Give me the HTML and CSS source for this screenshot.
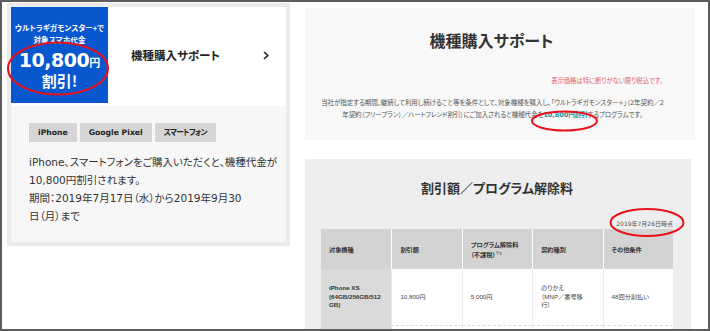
FILE: index.html
```html
<!DOCTYPE html>
<html lang="ja">
<head>
<meta charset="utf-8">
<title>機種購入サポート</title>
<link rel="stylesheet" href="styles.css">
</head>
<body>
<div class="frame">
  <div class="layout">
    <article class="promo-card">
      <div class="promo-head">
        <div class="promo-badge">
          <p class="badge-lead">ウルトラギガモンスター+で<br>対象スマホ代金</p>
          <p class="badge-amount">10,800<span class="yen">円</span></p>
          <p class="badge-off">割引!</p>
        </div>
        <div class="promo-title">機種購入サポート</div>
        <svg class="chevron" width="6" height="9" viewBox="0 0 6 9"><polyline points="1,1 4.8,4.5 1,8" fill="none" stroke="#222" stroke-width="1.6"/></svg>
      </div>
      <div class="promo-body">
        <ul class="tags">
          <li>iPhone</li>
          <li>Google Pixel</li>
          <li class="tag-ja">スマートフォン</li>
        </ul>
        <p class="promo-text">iPhone、スマートフォンをご購入いただくと、機種代金が<br>10,800円割引されます。<br>期間：2019年7月17日（水）から2019年9月30<br>日（月）まで</p>
      </div>
    </article>

    <main class="detail">
      <section class="intro">
        <h1 class="intro-title">機種購入サポート</h1>
        <p class="tax-note">表示価格は特に断りがない限り税込です。</p>
        <p class="intro-text">当社が指定する期間、継続して利用し続けること等を条件として、対象機種を購入し、「ウルトラギガモンスター+」（2年契約／2年契約（フリープラン）／ハートフレンド割引）にご加入されると機種代金を<strong class="accent">10,800円割引</strong>するプログラムです。</p>
      </section>

      <section class="fees">
        <h2 class="fees-title">割引額／プログラム解除料</h2>
        <p class="as-of">2019年7月26日時点</p>
        <table class="fee-table">
          <thead>
            <tr>
              <th>対象機種</th>
              <th>割引額</th>
              <th>プログラム解除料<br>（不課税）<sup>※1</sup></th>
              <th>契約種別</th>
              <th>その他条件</th>
            </tr>
          </thead>
          <tbody>
            <tr>
              <td class="model">iPhone XS<br>(64GB/256GB/512<br>GB)</td>
              <td>10,800円</td>
              <td>5,000円</td>
              <td>のりかえ<br>（MNP／番号移<br>行）</td>
              <td>48回分割払い</td>
            </tr>
            <tr>
              <td class="model">iPhone XS Max<br>(64GB/256GB/512<br>GB)</td>
              <td>10,800円</td>
              <td>5,000円</td>
              <td>のりかえ<br>（MNP／番号移<br>行）</td>
              <td>48回分割払い</td>
            </tr>
          </tbody>
        </table>
      </section>
    </main>
  </div>

  <svg class="marks" width="710" height="331" viewBox="0 0 710 331">
    <ellipse cx="58" cy="68.5" rx="50" ry="26" />
    <ellipse cx="564.5" cy="121" rx="32.5" ry="9.5" />
    <ellipse cx="647" cy="222.5" rx="36.5" ry="13.5" />
  </svg>
</div>
</body>
</html>
```

FILE: styles.css
```css
* {
  box-sizing: border-box;
}

body {
  margin: 0;
  font-family: "DejaVu Sans", "Noto Sans CJK JP", sans-serif;
  font-feature-settings: "palt";
  color: #333;
  background: #fff;
}

p, h1, h2 {
  margin: 0;
}

.frame {
  position: relative;
  width: 710px;
  height: 331px;
  border: 2px solid #5c5c5c;
  overflow: hidden;
  background: #fff;
}

.layout {
  display: flex;
  align-items: flex-start;
  padding: 1px 0 0 5px;
}

/* ---------- left promo card ---------- */
.promo-card {
  flex: none;
  width: 283px;
  border: 4px solid #ebebeb;
  background: #fff;
}

.promo-head {
  display: flex;
  align-items: center;
  height: 96px;
}

.promo-badge {
  align-self: stretch;
  width: 97px;
  background: #0957cf;
  color: #fff;
  text-align: center;
  font-family: "Noto Sans CJK JP", sans-serif;
  font-weight: 700;
  padding-top: 15px;
}

.badge-lead {
  font-size: 7.5px;
  line-height: 12px;
  letter-spacing: 0.1px;
}

.badge-amount {
  margin-top: 3px;
  font-family: "DejaVu Sans", sans-serif;
  font-size: 19px;
  line-height: 22px;
  letter-spacing: -0.5px;
}

.badge-amount .yen {
  font-family: "Noto Sans CJK JP", sans-serif;
  font-size: 11px;
  letter-spacing: 0;
}

.badge-off {
  font-size: 15px;
  line-height: 16px;
}

.promo-title {
  flex: 1;
  margin-left: 23px;
  font-family: "Noto Sans CJK JP", sans-serif;
  font-weight: 700;
  font-size: 11.5px;
  color: #222;
}

.chevron {
  margin-right: 17px;
  flex: none;
}

.promo-body {
  margin-top: 3px;
  height: 136px;
  padding: 17px 6px 0 18px;
  background: repeating-linear-gradient(90deg, #f4f4f4 0 1px, #f9f9f9 1px 2px);
}

.tags {
  display: flex;
  gap: 3px;
  margin: 0;
  padding: 0;
  list-style: none;
}

.tags li {
  height: 19px;
  line-height: 19px;
  padding: 0 9px;
  background: #d5d5d5;
  font-size: 7.7px;
  font-weight: 700;
  color: #222;
}

.tags .tag-ja {
  letter-spacing: -0.7px;
}

.promo-text {
  margin-top: 11px;
  font-size: 10.5px;
  line-height: 18px;
  color: #333;
  white-space: nowrap;
}

/* ---------- right detail ---------- */
.detail {
  flex: none;
  margin-left: 15px;
  padding-top: 5px;
  display: flex;
  flex-direction: column;
  gap: 19px;
}

.intro {
  width: 390px;
  height: 132px;
  padding: 22px 32px 0 15px;
  background: #f8f8f8;
  text-align: center;
}

.intro-title {
  font-family: "Noto Sans CJK JP", sans-serif;
  font-size: 16px;
  line-height: 20px;
  font-weight: 700;
  color: #333;
}

.tax-note {
  margin-top: 25px;
  text-align: right;
  font-size: 6.3px;
  line-height: 12px;
  color: #e4606c;
}

.intro-text {
  margin-top: 10px;
  margin-right: -2px;
  font-size: 6.5px;
  line-height: 12px;
  letter-spacing: -0.06px;
  color: #555;
}

.accent {
  color: #1f939c;
  font-weight: 700;
}

.fees {
  width: 386px;
  height: 200px;
  padding: 20px 18px 0 16px;
  background: #eeeeee;
}

.fees-title {
  text-align: center;
  font-family: "Noto Sans CJK JP", sans-serif;
  font-size: 13px;
  line-height: 18px;
  font-weight: 700;
  color: #333;
}

.as-of {
  margin-top: 22px;
  text-align: right;
  font-size: 6px;
  line-height: 10px;
  color: #555;
}

.fee-table {
  width: 352px;
  table-layout: fixed;
  border-collapse: separate;
  border-spacing: 0;
  font-family: "Liberation Sans", "Noto Sans CJK JP", sans-serif;
  font-size: 6.2px;
  color: #444;
}

.fee-table th {
  height: 40px;
  padding: 0 8px;
  background: #d3d3d3;
  border-left: 1px solid #fff;
  text-align: left;
  vertical-align: middle;
  font-weight: 700;
  line-height: 9px;
  color: #333;
}

.fee-table th:first-child {
  border-left: 0;
}

.fee-table sup {
  font-size: 4px;
  vertical-align: 2px;
}

.fee-table td {
  height: 57px;
  padding: 0 8px;
  background: #fff;
  border-left: 1px solid #ececec;
  border-bottom: 1px dashed #dcdcdc;
  vertical-align: middle;
  line-height: 8.5px;
}

.fee-table td.model {
  border-left: 0;
  background: #dadada;
  font-weight: 700;
  color: #333;
}

/* ---------- annotation marks ---------- */
.marks {
  position: absolute;
  top: -2px;
  left: -2px;
  pointer-events: none;
}

.marks ellipse {
  fill: none;
  stroke: #e8121a;
  stroke-width: 2;
}
```
